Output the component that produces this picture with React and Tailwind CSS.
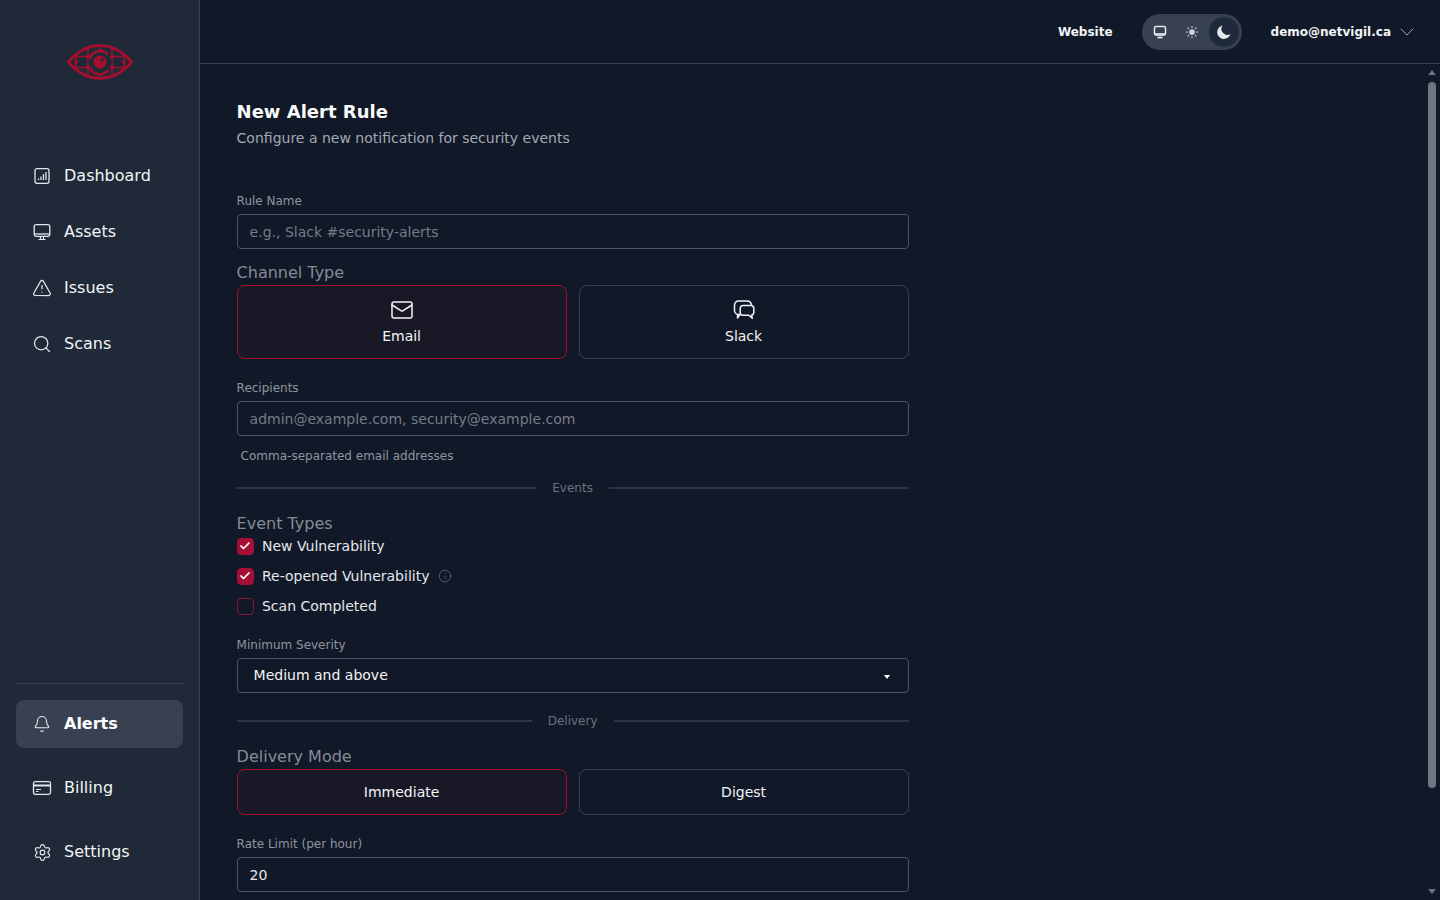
import React from "react";
import { TriangleAlert, Search, Bell, Settings, ChevronDown, Mail, Sun, Check, Info } from "lucide-react";

const font = "font-['DejaVu_Sans',sans-serif]";

function Logo() {
  return (
    <svg width="66" height="36" viewBox="0 0 66 36" fill="none" stroke="#a50f2d">
      <path d="M1.500 18C11 6.500 22 1.700 33 1.700S55 6.500 64.500 18C55 29.500 44 34.300 33 34.300S11 29.500 1.500 18Z" strokeWidth="2.800" />
      <path d="M4 12.500h58M4 23.500h58M21 4v28M45 4v28M9 10v16M57 10v16M33 2v5M33 29v5" strokeWidth="1.500" />
      <circle cx="33" cy="18" r="11.500" fill="#1f2937" stroke="none" />
      <path d="M23 15a10.500 10.500 0 0 1 18-4.500M23 24a10.500 10.500 0 0 0 18 2" strokeWidth="2.600" />
      <circle cx="33" cy="18" r="6.500" fill="#a50f2d" stroke="none" />
      <circle cx="35" cy="15.500" r="1.500" fill="#1f2937" stroke="none" />
      <g fill="#a50f2d" stroke="none">
        <circle cx="21" cy="12.500" r="2" /><circle cx="21" cy="23.500" r="2" /><circle cx="45" cy="12.500" r="2" /><circle cx="45" cy="23.500" r="2" /><circle cx="9" cy="18" r="2" /><circle cx="57" cy="18" r="2" />
      </g>
    </svg>
  );
}

function DashIcon() {
  return (
    <svg width="20" height="20" viewBox="0 0 20 20" fill="none" stroke="currentColor">
      <rect x="3" y="2.700" width="14" height="14.600" rx="2" strokeWidth="1.300" />
      <path d="M6.500 14v-1.500M9 14v-3.500M11.500 14V8M14 14V6" strokeWidth="1.300" />
    </svg>
  );
}

function ScreenIcon() {
  return (
    <svg width="20" height="20" viewBox="0 0 20 20" fill="none" stroke="currentColor">
      <rect x="2.200" y="2.700" width="15.600" height="11.600" rx="2" strokeWidth="1.300" />
      <path d="M2.500 12h15" strokeWidth="1.300" />
      <path d="M8.500 14.500v2.500M11.500 14.500v2.500M6.500 17.500h7" strokeWidth="1.200" />
    </svg>
  );
}

function SmallScreenIcon() {
  return (
    <svg width="14" height="14" viewBox="0 0 14 14" fill="none" stroke="currentColor">
      <rect x="1.500" y="1.500" width="11" height="8.500" rx="1.500" strokeWidth="1.500" />
      <path d="M1.500 9.200h11" strokeWidth="2" />
      <path d="M4.500 12.500h5" strokeWidth="1.800" />
    </svg>
  );
}

function MoonIcon() {
  return (
    <svg width="16" height="16" viewBox="0 0 16 16" fill="currentColor">
      <path d="M6.500 1.500A6.800 6.800 0 1 0 14.500 10 6 6 0 0 1 6.500 1.500Z" />
    </svg>
  );
}

function CardIcon() {
  return (
    <svg width="20" height="20" viewBox="0 0 20 20" fill="none" stroke="currentColor">
      <rect x="1.500" y="3.700" width="17" height="12.600" rx="1.800" strokeWidth="1.300" />
      <path d="M1.500 7.500h17" strokeWidth="2" />
      <path d="M4 11.500h5M4 13.500h2.500" strokeWidth="1.200" />
    </svg>
  );
}

function ChatIcon() {
  return (
    <svg width="24" height="24" viewBox="0 0 24 24" fill="none" stroke="currentColor" strokeWidth="1.500" strokeLinejoin="round">
      <path d="M8 16.500H6.500A4 4 0 0 1 2.500 12.500V7A4 4 0 0 1 6.500 3h8.500A4.500 4.500 0 0 1 19.500 7v.500" />
      <path d="M11 7.500h8a2.800 2.800 0 0 1 2.800 2.800v4.200a2.800 2.800 0 0 1-2.300 2.700l.8 3-3.500-3h-5.800a2.800 2.800 0 0 1-2.800-2.800v-4.100A2.800 2.800 0 0 1 11 7.500Z" />
      <path d="M8 16.500l-2.500 3.500V16.500" />
    </svg>
  );
}

function NavItem({ icon, label, active, className = "" }) {
  return (
    <div className={`flex h-12 items-center gap-3 rounded-lg pl-4 text-[#f3f4f6] ${active ? "bg-[#374151] font-bold text-white" : ""} ${className}`}>
      <span className="flex w-5 justify-center text-[#e5e7eb]">{icon}</span>
      <span className="text-base">{label}</span>
    </div>
  );
}

function Field({ label, value, placeholder, className = "" }) {
  return (
    <div className={className}>
      <label className="block h-[18px] text-xs leading-[18px] text-[#8f95a0]">{label}</label>
      <input
        readOnly
        value={value || ""}
        placeholder={placeholder}
        className="mt-[4px] block h-[35px] w-full rounded border border-[#4b5563] bg-transparent px-3 text-sm text-[#e5e7eb] outline-none placeholder:text-[#757c88]"
      />
    </div>
  );
}

function Divider({ label, className = "" }) {
  return (
    <div className={`flex items-center gap-4 ${className}`}>
      <div className="h-0.5 flex-1 bg-[#2b3544]" />
      <span className="text-xs leading-[18px] text-[#6b7280]">{label}</span>
      <div className="h-0.5 flex-1 bg-[#2b3544]" />
    </div>
  );
}

function Choice({ active, children, className = "" }) {
  return (
    <div className={`flex flex-1 flex-col items-center justify-center rounded-lg border text-sm text-[#f3f4f6] ${active ? "border-[#a50f2d] bg-[#191827]" : "border-[#374151]"} ${className}`}>
      {children}
    </div>
  );
}

function Checkbox({ checked, label, extra }) {
  return (
    <div className="flex h-[30px] items-center">
      <span className={`flex h-[17px] w-[17px] items-center justify-center rounded border ${checked ? "border-[#a50f35] bg-[#a50f35]" : "border-[#8a1535]"}`}>
        {checked && <Check size={12} strokeWidth={3.5} className="text-white" />}
      </span>
      <span className="ml-[8.400px] text-sm text-[#e5e7eb]">{label}</span>
      {extra}
    </div>
  );
}

export default function App() {
  return (
    <div className={`flex h-screen w-full overflow-hidden bg-[#111827] ${font}`}>
      <aside className="flex w-[200px] shrink-0 flex-col border-r border-[#374151] bg-[#1f2937] px-4">
        <div className="flex h-[124px] items-center justify-center">
          <Logo />
        </div>
        <nav className="flex flex-col gap-2 pt-[28px]">
          <NavItem icon={<DashIcon />} label="Dashboard" />
          <NavItem icon={<ScreenIcon />} label="Assets" />
          <NavItem icon={<TriangleAlert size={20} strokeWidth={1.5} />} label="Issues" />
          <NavItem icon={<Search size={20} strokeWidth={1.5} />} label="Scans" />
        </nav>
        <div className="mt-auto border-t border-[#374151] pb-[24px] pt-4">
          <NavItem active icon={<Bell size={18} strokeWidth={1.5} />} label="Alerts" />
          <NavItem icon={<CardIcon />} label="Billing" className="mt-4" />
          <NavItem icon={<Settings size={19} strokeWidth={1.5} />} label="Settings" className="mt-4" />
        </div>
      </aside>

      <div className="flex min-w-0 flex-1 flex-col">
        <header className="flex h-16 shrink-0 items-center justify-end border-b border-[#374151] pr-[21px] text-xs font-bold text-[#f3f4f6]">
          <span>Website</span>
          <div className="ml-[29px] flex h-9 w-[100px] items-center justify-between rounded-full bg-[#374151] px-[2px]">
            <span className="flex w-8 justify-center text-[#e5e7eb]"><SmallScreenIcon /></span>
            <span className="flex w-8 justify-center text-[#d1d5db]"><Sun size={14} strokeWidth={1.8} fill="currentColor" /></span>
            <span className="flex h-8 w-8 items-center justify-center rounded-full border border-[#334155] bg-[#1e293b] text-[#e5e7eb]"><MoonIcon /></span>
          </div>
          <span className="ml-[29px]">demo@netvigil.ca</span>
          <ChevronDown size={24} strokeWidth={1} className="ml-1 text-[#9ca3af]" />
        </header>

        <div className="relative min-h-0 flex-1">
          <main className="h-full overflow-y-scroll">
            <div className="w-[708.600px] pb-[62px] pl-[36.600px] pt-9">
              <h1 className="text-lg font-bold leading-6 text-[#f9fafb]">New Alert Rule</h1>
              <p className="mt-[3px] text-sm leading-[23px] text-[#a3a9b3]">Configure a new notification for security events</p>

              <Field className="mt-[42px]" label="Rule Name" placeholder="e.g., Slack #security-alerts" />

              <div className="mt-[12px] h-6 text-base leading-6 text-[#858b96]">Channel Type</div>
              <div className="flex gap-3">
                <Choice active className="h-[74px] pb-px">
                  <Mail size={24} strokeWidth={1.5} />
                  <span className="mt-[4px]">Email</span>
                </Choice>
                <Choice className="h-[74px] pb-px">
                  <ChatIcon />
                  <span className="mt-[4px]">Slack</span>
                </Choice>
              </div>

              <Field className="mt-[20px]" label="Recipients" placeholder="admin@example.com, security@example.com" />
              <p className="mt-[11px] pl-1 text-xs leading-[18px] text-[#8f95a0]">Comma-separated email addresses</p>

              <Divider label="Events" className="mt-[14px]" />

              <div className="mt-[17px] h-[17px] text-base leading-5 text-[#858b96]">Event Types</div>
              <Checkbox checked label="New Vulnerability" />
              <Checkbox
                checked
                label="Re-opened Vulnerability"
                extra={<Info size={14} strokeWidth={1.2} className="ml-[9px] text-[#6b7280]" />}
              />
              <Checkbox label="Scan Completed" />

              <div className="mt-[15px] h-[18px] text-xs leading-[18px] text-[#8f95a0]">Minimum Severity</div>
              <div className="relative mt-[4px] flex h-[35px] items-center rounded border border-[#4b5563] pb-[2px] pl-4 text-sm text-[#f3f4f6]">
                Medium and above
                <span className="absolute right-[18px] top-[16px] h-0 w-0 border-x-[3px] border-t-4 border-x-transparent border-t-white" />
              </div>

              <Divider label="Delivery" className="mt-[19px]" />

              <div className="mt-[15px] h-6 text-base leading-6 text-[#858b96]">Delivery Mode</div>
              <div className="flex gap-3">
                <Choice active className="h-[46px]">Immediate</Choice>
                <Choice className="h-[46px]">Digest</Choice>
              </div>

              <Field className="mt-[20px]" label="Rate Limit (per hour)" value="20" />
            </div>
          </main>

          <span className="absolute right-[4px] top-[6px] h-0 w-0 border-x-4 border-b-[5px] border-x-transparent border-b-[#6f7482]" />
          <span className="absolute right-[4px] top-[18px] h-[706px] w-2 rounded-full bg-[#6f7482]" />
          <span className="absolute bottom-[6px] right-[4px] h-0 w-0 border-x-4 border-t-[5px] border-x-transparent border-t-[#6f7482]" />
        </div>
      </div>
    </div>
  );
}
